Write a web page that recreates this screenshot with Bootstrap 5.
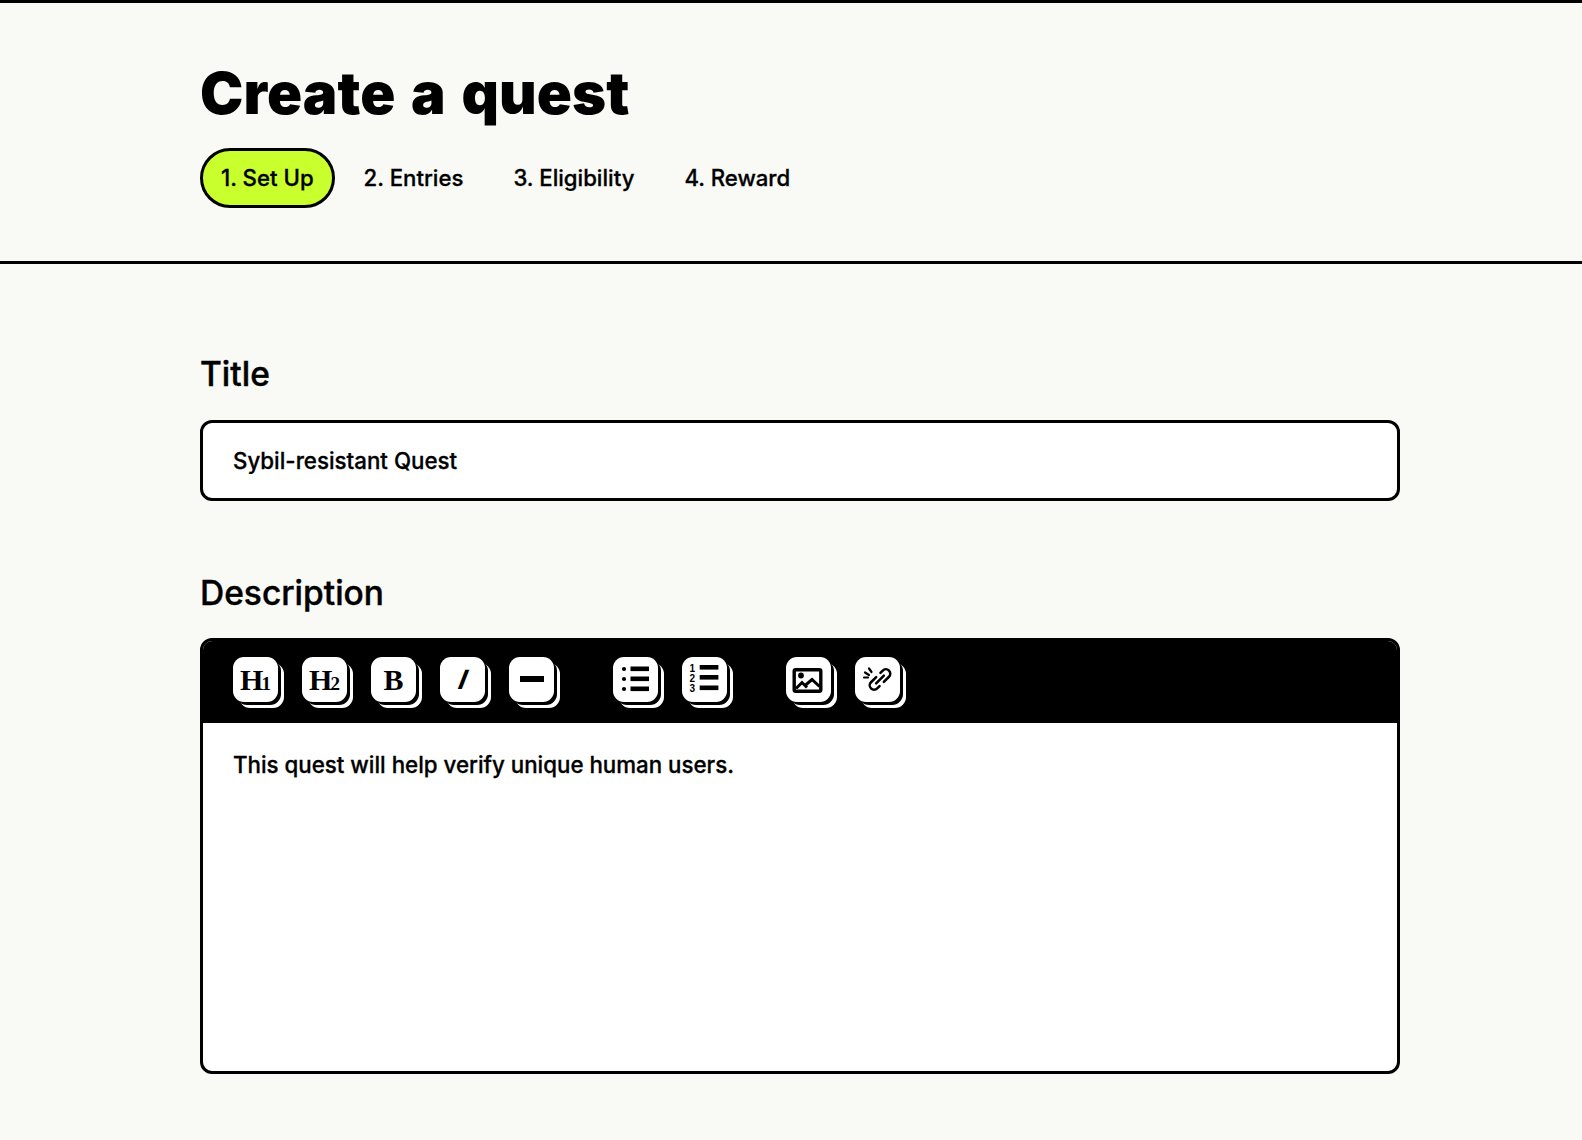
<!DOCTYPE html>
<html lang="en">
<head>
<meta charset="utf-8">
<title>Create a quest</title>
<link href="https://cdn.jsdelivr.net/npm/bootstrap@5.3.0/dist/css/bootstrap.min.css" rel="stylesheet">
<style>
html, body { background: #f9faf5; }
body { font-family: Inter, "Liberation Sans", sans-serif; color: #000; min-height: 1140px; }
.quest-top { border-top: 3px solid #000; border-bottom: 3px solid #000; height: 264px; }
.quest-wrap { width: 1200px; margin-left: 200px; }
.quest-heading { font-size: 58px; font-weight: 900; line-height: 68px; margin: 56px 0 0; letter-spacing: .1px; word-spacing: 4px; }
.quest-steps { margin-top: 21px; font-size: 22.2px; font-weight: 500; -webkit-text-stroke: .3px #000; }
.quest-step { height: 60px; line-height: 54px; padding: 0 18px; color: #000; text-decoration: none; border: 3px solid transparent; border-radius: 30px; }
.quest-step.on { background: #c8ff2c; border-color: #000; }
.quest-label { font-size: 33.5px; font-weight: 500; -webkit-text-stroke: .4px #000; line-height: 40px; margin: 0 0 25px; display: block; }
.quest-field { margin-top: 90px; margin-bottom: 72px; }
.quest-field .quest-label { margin-bottom: 26px; }
.quest-title-box { height: 81px; border: 3px solid #000; border-radius: 12px; background: #fff; padding: 0 30px; font-size: 22.3px; font-weight: 500; -webkit-text-stroke: .3px #000; color: #000; box-shadow: none; }
.quest-title-box:focus { border-color: #000; box-shadow: none; }
.quest-editor { border: 3px solid #000; border-radius: 12px; background: #fff; height: 436px; overflow: hidden; }
.quest-bar { background: #000; height: 82px; padding: 16px 30px 0; }
.quest-tool { width: 45px; height: 45px; padding: 0; background: #fff; border: 0; border-radius: 11px; box-shadow: 3px 3px 0 0 #000, 6px 6px 0 0 #fff; color: #000; margin-right: 24px; font-family: "Liberation Serif", serif; font-weight: 700; font-size: 30px; line-height: 45px; text-align: center; }
.quest-tool.gap-after { margin-right: 59px; }
.quest-tool svg { display: block; }
.quest-idx { font-size: 19px; margin-left: -2px; }
.quest-tool.tilt { font-family: "Liberation Sans", sans-serif; font-style: italic; font-size: 28px; }
.quest-slant { display: inline-block; transform: skewX(-11deg); }
.quest-num { font-family: "Liberation Sans", sans-serif; font-weight: 700; font-size: 10px; }
.quest-body { padding: 24px 30px; font-size: 22.3px; font-weight: 500; -webkit-text-stroke: .3px #000; line-height: 36px; }
</style>
</head>
<body>
<header class="quest-top">
  <div class="quest-wrap">
    <h1 class="quest-heading">Create a quest</h1>
    <nav class="d-flex align-items-center gap-2 quest-steps">
      <a class="quest-step on" href="#">1. Set Up</a>
      <a class="quest-step" href="#">2. Entries</a>
      <a class="quest-step" href="#">3. Eligibility</a>
      <a class="quest-step" href="#">4. Reward</a>
    </nav>
  </div>
</header>
<main class="quest-wrap">
  <section class="quest-field">
    <label class="quest-label" for="qt">Title</label>
    <input id="qt" class="form-control quest-title-box" type="text" value="Sybil-resistant Quest">
  </section>
  <section>
    <label class="quest-label">Description</label>
    <div class="quest-editor">
      <div class="quest-bar d-flex align-items-start">
        <button class="quest-tool" type="button">H<span class="quest-idx">1</span></button>
        <button class="quest-tool" type="button">H<span class="quest-idx">2</span></button>
        <button class="quest-tool" type="button">B</button>
        <button class="quest-tool tilt" type="button"><span class="quest-slant">I</span></button>
        <button class="quest-tool gap-after" type="button" aria-label="Rule"><svg width="45" height="45" viewBox="0 0 45 45"><rect x="11" y="19" width="24" height="6"/></svg></button>
        <button class="quest-tool" type="button" aria-label="Bulleted list"><svg width="45" height="45" viewBox="0 0 45 45"><circle cx="11" cy="12" r="2.1"/><circle cx="11" cy="22" r="2.1"/><circle cx="11" cy="32" r="2.1"/><rect x="17.500" y="9.500" width="18.500" height="4.600"/><rect x="17.500" y="19.500" width="18.500" height="4.600"/><rect x="17.500" y="29.500" width="18.500" height="4.600"/></svg></button>
        <button class="quest-tool gap-after" type="button" aria-label="Numbered list"><svg width="45" height="45" viewBox="0 0 45 45"><g class="quest-num"><text x="7.500" y="15">1</text><text x="7.500" y="25">2</text><text x="7.500" y="35">3</text></g><rect x="17.700" y="8" width="18.700" height="4.600"/><rect x="17.700" y="18" width="18.700" height="4.600"/><rect x="17.700" y="28.500" width="18.700" height="4.600"/></svg></button>
        <button class="quest-tool" type="button" aria-label="Image"><svg width="45" height="45" viewBox="0 0 45 45"><g transform="translate(-1 1)"><rect x="9.200" y="11.700" width="26.600" height="21.600" rx="1.500" fill="none" stroke="#000" stroke-width="3.400"/><circle cx="16" cy="17.500" r="2.900"/><path d="M11 30.500l6-6 5 5M20 27.500l7-6 7.500 7" fill="none" stroke="#000" stroke-width="3"/></g></svg></button>
        <button class="quest-tool" type="button" aria-label="Link"><svg width="45" height="45" viewBox="0 0 45 45" fill="none" stroke="#000" stroke-width="2.500" stroke-linecap="round"><g transform="translate(0 1)"><g transform="rotate(-45 25 21.500)"><path d="M24 17.100H16.700a4.400 4.400 0 0 0 0 8.800H20"/><path d="M26 25.900H33.300a4.400 4.400 0 0 0 0-8.800H30"/><path d="M19.500 21.500H30.500"/></g><path d="M10 14.500l4 2.500M14 10.500l2.500 3.500M9 19.500h4" stroke-width="2.200"/></g></svg></button>
      </div>
      <div class="quest-body">This quest will help verify unique human users.</div>
    </div>
  </section>
</main>
<script src="https://cdn.jsdelivr.net/npm/bootstrap@5.3.0/dist/js/bootstrap.bundle.min.js"></script>
</body>
</html>
